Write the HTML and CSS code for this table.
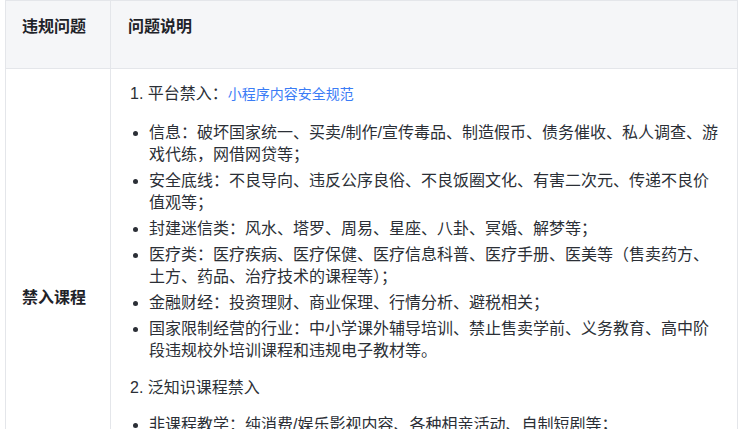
FILE: index.html
```html
<!DOCTYPE html>
<html lang="zh-CN">
<head>
  <meta charset="UTF-8">
  <meta name="viewport" content="width=device-width, initial-scale=1.0">
  <title>违规问题说明</title>
  <link rel="stylesheet" href="styles.css">
</head>
<body>
  <table class="rule-table">
    <thead>
      <tr>
        <th class="col-issue">违规问题</th>
        <th class="col-desc">问题说明</th>
      </tr>
    </thead>
    <tbody>
      <tr>
        <td class="issue-name">禁入课程</td>
        <td class="issue-desc">
          <ol class="rule-list">
            <li>
              <span class="rule-title">平台禁入：<a href="#" class="rule-link">小程序内容安全规范</a></span>
              <ul class="sub-list first">
                <li>信息：破坏国家统一、买卖/制作/宣传毒品、制造假币、债务催收、私人调查、游戏代练，网借网贷等；</li>
                <li>安全底线：不良导向、违反公序良俗、不良饭圈文化、有害二次元、传递不良价值观等；</li>
                <li>封建迷信类：风水、塔罗、周易、星座、八卦、冥婚、解梦等；</li>
                <li>医疗类：医疗疾病、医疗保健、医疗信息科普、医疗手册、医美等（售卖药方、土方、药品、治疗技术的课程等）；</li>
                <li>金融财经：投资理财、商业保理、行情分析、避税相关；</li>
                <li>国家限制经营的行业：中小学课外辅导培训、禁止售卖学前、义务教育、高中阶段违规校外培训课程和违规电子教材等。</li>
              </ul>
            </li>
            <li>
              <span class="rule-title">泛知识课程禁入</span>
              <ul class="sub-list">
                <li>非课程教学：纯消费/娱乐影视内容、各种相亲活动、自制短剧等；</li>
              </ul>
            </li>
          </ol>
        </td>
      </tr>
    </tbody>
  </table>
</body>
</html>
```

FILE: styles.css
```css
body {
  margin: 0;
  padding: 0 5px;
  background: #fff;
  font-family: 'Liberation Sans', 'Noto Sans CJK SC', sans-serif;
  color: #1f2329;
}
.rule-table {
  width: 733px;
  border-collapse: collapse;
  table-layout: fixed;
}
.rule-table th, .rule-table td {
  border: 1px solid #e4e6ea;
  text-align: left;
}
.rule-table th {
  background: #f5f6f8;
  font-size: 16px;
  font-weight: bold;
  line-height: 22px;
  height: 68px;
  box-sizing: border-box;
  padding: 15px 16px 0;
  vertical-align: top;
}
.col-issue {
  width: 105px;
}
.rule-table th.col-desc {
  padding-left: 17px;
}
.issue-name {
  font-size: 16px;
  font-weight: bold;
  line-height: 22px;
  padding: 0 16px;
  vertical-align: middle;
}
.issue-desc {
  font-size: 16px;
  line-height: 22px;
  color: #2b2f36;
  padding: 14px 14px 90px 19px;
  vertical-align: top;
}
.rule-list {
  margin: 0;
  padding: 0;
  list-style: decimal inside;
}
.rule-list > li + li {
  margin-top: 15px;
}
.rule-link {
  font-size: 14px;
  color: #3a7cf6;
  text-decoration: none;
}
.sub-list {
  margin: 15px 0 0;
  padding-left: 19px;
  list-style: disc outside;
}
.sub-list.first {
  margin-top: 17px;
}
.sub-list li + li {
  margin-top: 4px;
}
```
